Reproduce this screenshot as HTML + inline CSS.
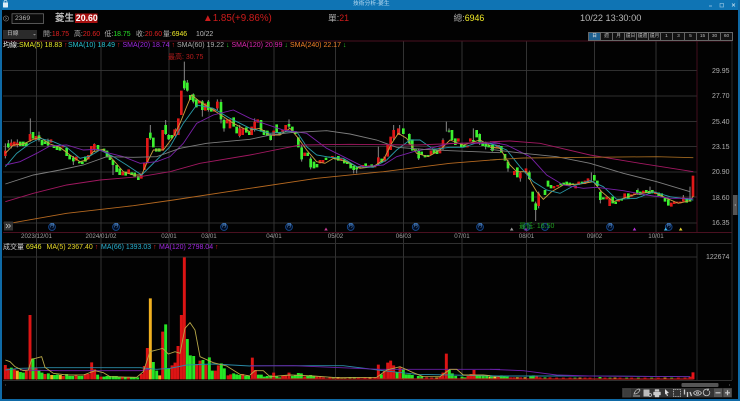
<!DOCTYPE html>
<html><head><meta charset="utf-8"><style>
html,body{margin:0;padding:0;background:#000}
#p{position:relative;width:740px;height:401px;overflow:hidden;background:#020202;font-family:"Liberation Sans","Noto Sans CJK TC",sans-serif;filter:blur(.3px)}
#p span,#p div.a{position:absolute;white-space:nowrap;line-height:1}
svg{position:absolute;left:0;top:0}
polyline{stroke-width:2.700}
.d{font-size:6.200px;color:#a0a0a0;top:234px;transform:translateX(-50%)}
.y{font-size:7px;color:#b0b0b0;left:712px}
.h{font-size:6.900px;top:32px;color:#b5b5b5}
.m{font-size:7px;top:41.500px}
.v{font-size:7px;top:244px}
.b{top:32px;height:7px;width:11px;border:.5px solid #666;font-size:4.800px;line-height:7px!important;text-align:center;color:#bbb;background:#111}
.t{font-size:4.800px;color:#6aa8e8}
</style></head><body><div id="p">
<svg width="740" height="401" viewBox="0 0 740 401">
<rect x="0" y="0" width="740" height="10" fill="#0f74b4"/>
<rect x="0" y="0" width="2" height="401" fill="#0f6aa6"/>
<rect x="738" y="0" width="2" height="401" fill="#0f6aa6"/>
<rect x="0" y="399" width="740" height="2" fill="#0f6aa6"/>
<rect x="3" y="2.500" width="5" height="5" fill="#dfeef8" rx=".5"/><path d="M4 3V1.800a1.500 1.500 0 0 1 3 0V3" stroke="#dfeef8" fill="none" stroke-width=".7"/>
<path d="M709 6h3" stroke="#9fcbe6" stroke-width=".8"/><rect x="720" y="3.500" width="3.500" height="3.500" fill="none" stroke="#9fcbe6" stroke-width=".6"/><path d="M732 3.500l3 3m0-3l-3 3" stroke="#cfe4f2" stroke-width=".7"/>
<circle cx="6" cy="18.500" r="2.600" fill="none" stroke="#888" stroke-width=".6"/><path d="M5 17.500l2 1-2 1" fill="none" stroke="#888" stroke-width=".5"/>
<rect x="12" y="13.800" width="31.500" height="9.700" fill="#0a0a0a" stroke="#777" stroke-width=".7"/>
<rect x="75" y="13.500" width="22.500" height="9.500" fill="#a81010"/>
<rect x="3" y="30" width="34" height="9" fill="#2b2b2b"/><path d="M33 34l1.500 1.500 1.500-1.500" fill="#888"/>
<!-- frame/grid -->
<path d="M3 70.500H697M3 96H697M3 121.500H697M3 146.500H697M3 172H697M3 197H697M3 223H697" stroke="#2f2f2f" stroke-width=".9"/>
<path d="M36.500 41V380M101 41V380M169 41V380M209 41V380M274 41V380M335.500 41V380M403.500 41V380M462 41V380M526.500 41V380M594.500 41V380M656 41V380" stroke="#383838" stroke-width=".9"/>
<path d="M3 41H732M3 232.500H732M697 41V232" stroke="#4a1020" stroke-width=".9"/>
<path d="M732 41V380M3 243.500H732M3 257H697M3 380.500H732M697 244V380" stroke="#303030" stroke-width=".9"/>
<!-- markers -->
<g fill="#000c22" stroke="#164a90" stroke-width=".9"><circle cx="52" cy="227" r="3.400"/><circle cx="116" cy="227" r="3.400"/><circle cx="224" cy="227" r="3.400"/><circle cx="289" cy="227" r="3.400"/><circle cx="350.700" cy="227" r="3.400"/><circle cx="415.700" cy="227" r="3.400"/><circle cx="480" cy="227" r="3.400"/><circle cx="526.700" cy="227" r="3.400"/><circle cx="545" cy="227" r="3.400"/><circle cx="610" cy="227" r="3.400"/><circle cx="668.700" cy="227" r="3.400"/></g>
<path d="M326 227.500l-1.800 3h3.600z" fill="#c03a90"/><path d="M511.700 227.500l-1.800 3h3.600z" fill="#999"/><path d="M634.500 227.500l-1.800 3h3.600z" fill="#b030d0"/><path d="M665.700 227.500l-1.800 3h3.600z" fill="#40b8f0"/><path d="M680.700 227.500l-1.800 3h3.600z" fill="#e0d030"/><path d="M526 227.500l-1.800 3h3.600z" fill="#8030a0"/>
<rect x="4" y="221.500" width="9" height="9" fill="#333"/><path d="M6 224l2 2-2 2M8.500 224l2 2-2 2" fill="none" stroke="#ccc" stroke-width=".7"/>
<!-- candles section 1 -->
<g transform="translate(0,60) scale(.33333)" fill="none">
<path stroke="#888" stroke-width="3" d="M16 250V295M25 240V265M34 238V265M52 238V262M91 175V245M117 215V245M144 236V260M220 288V315M283 250V275M339 300V345M451 195V240M497 180V225M506 222V240M527 205V232M553 5V90M562 60V95M580 100V130M607 120V170M625 120V155M652 118V150M663 118V190M672 175V215M719 195V232"/>
<path stroke="#e01818" stroke-width="8" d="M16 272V288M34 248V258M43 245V258M52 248V256M90 222V242M108 228V240M153 238V248M189 258V262M229 290V302M265 285V298M274 258V282M283 252V268M368 335V346M386 328V342M424 340V356M433 308V330M442 234V310M488 210V272M524 208V228M535 175V225M544 92V165M598 122V130M616 130V152M643 147V155M652 125V145M681 178V190M690 178V205M719 205V228M728 205V225"/>
<path stroke="#3cf030" stroke-width="8" d="M25 250V262M61 245V258M70 245V258M79 248V258M99 216V236M117 226V240M126 240V256M135 244V252M144 244V256M162 255V264M171 258V270M180 262V272M200 264V288M209 285V298M220 293V304M238 305V310M247 305V312M256 290V305M294 255V270M303 268V272M312 266V275M321 272V292M330 285V300M339 300V315M350 315V336M359 325V345M377 335V347M395 337V345M404 338V350M415 348V360M451 218V235M460 233V262M469 265V275M478 265V275M497 195V222M506 225V238M515 225V235M553 62V85M562 68V92M571 105V120M580 103V125M589 118V142M607 124V150M625 125V150M634 143V155M663 126V178M672 180V205M701 172V200M710 200V220M739 202V218M748 215V225"/>
<polyline stroke="#c8a040" points="16,280 40,255 70,252 100,238 120,232 150,252 180,262 210,285 240,305 260,300 280,275 310,268 340,300 370,335 400,345 425,345 440,310 460,270 490,270 520,230 540,190 560,140 575,105 600,125 640,150 670,170 700,190 750,215"/>
<polyline stroke="#2a9aa8" points="16,320 50,280 90,250 120,235 160,245 200,262 240,295 270,288 300,270 340,290 380,315 425,345 470,300 510,260 550,190 590,135 640,145 690,175 750,205"/>
<polyline stroke="#7a20a8" points="16,315 60,305 110,280 150,258 200,255 250,270 290,268 330,280 370,290 420,310 470,305 510,290 550,250 590,190 640,165 700,150 750,175"/>
<polyline stroke="#7d7d7d" points="16,372 100,345 180,330 250,315 320,290 400,292 470,290 540,265 620,250 750,238"/>
<polyline stroke="#a01860" points="16,425 100,400 200,375 300,360 420,350 510,335 600,310 750,285"/>
<polyline stroke="#b46820" points="40,488 200,460 400,437 520,420 750,385"/>
</g>
<!-- candles section 2 -->
<g transform="translate(250,60) scale(.33333)" fill="none">
<path stroke="#888" stroke-width="3" d="M14 175V215M62 222V242M117 178V205M155 255V305M182 290V328M311 318V340M320 320V340M385 260V315M431 195V240M449 195V225M478 220V255M506 265V300M589 185V215M597 205V218M579 235V270M670 205V245M689 220V255M707 245V268M727 252V275"/>
<path stroke="#e01818" stroke-width="8" d="M5 200V225M14 185V210M23 178V188M71 212V228M98 210V218M107 195V212M164 278V288M210 300V310M219 300V308M247 288V292M274 296V300M329 318V325M338 315V322M356 316V322M375 315V322M385 292V312M404 290V305M413 252V290M422 230V270M431 210V235M445 205V225M543 272V285M570 262V280M579 240V265M625 235V245M652 256V262M661 235V245M745 255V265"/>
<path stroke="#3cf030" stroke-width="8" d="M33 180V215M42 210V225M52 212V228M62 225V240M80 193V218M89 218V225M117 192V200M127 200V218M136 215V222M145 232V262M155 262V298M173 278V288M182 296V322M192 305V325M201 312V322M228 293V300M238 290V293M256 292V298M265 288V302M283 298V310M292 305V312M302 310V325M311 318V330M320 322V328M347 310V318M365 313V320M395 296V308M460 205V222M478 222V250M487 238V272M497 268V272M506 270V295M515 275V285M525 285V292M534 285V290M552 266V280M561 270V282M597 212V215M606 210V240M616 235V255M634 250V262M643 255V262M670 240V245M680 210V232M689 222V250M698 245V258M707 250V260M716 255V262M727 255V272"/>
<polyline stroke="#c8a040" points="0,210 30,205 60,225 90,225 120,205 145,235 170,270 200,305 225,310 250,295 290,305 330,325 370,320 400,300 425,250 445,220 470,235 500,280 535,290 570,270 600,240 640,255 690,240 730,262 750,265"/>
<polyline stroke="#2a9aa8" points="0,205 60,220 110,215 140,215 170,260 200,285 240,292 280,295 320,320 370,322 410,300 440,270 480,240 510,240 550,268 600,262 640,262 690,245 750,258"/>
<polyline stroke="#7a20a8" points="0,175 40,190 100,210 170,220 230,265 290,295 340,320 400,315 440,290 490,275 540,265 600,250 660,250 750,250"/>
<polyline stroke="#7d7d7d" points="0,238 60,225 120,218 230,212 300,222 380,240 440,262 520,268 600,272 750,278"/>
<polyline stroke="#a01860" points="0,285 100,265 150,255 300,253 500,255 750,245"/>
<polyline stroke="#b46820" points="0,385 200,355 400,335 600,310 750,298"/>
</g>
<!-- candles section 3 -->
<g transform="translate(490,60) scale(.33333)" fill="none">
<path stroke="#888" stroke-width="3" d="M54 300V335M91 335V365M118 332V360M137 425V483M146 395V445M304 337V365M331 392V430M600 380V415M580 405V425M480 380V400M444 385V405"/>
<path stroke="#e01818" stroke-width="8" d="M22 256V264M73 333V345M91 338V355M108 325V340M146 400V438M192 378V385M203 375V380M257 378V385M266 365V375M285 362V372M294 355V368M350 410V418M359 415V438M386 418V425M404 400V414M424 403V410M433 400V405M460 392V400M496 395V402M544 428V440M553 425V432M562 425V430M571 425V430M580 412V425"/>
<path stroke="#3cf030" stroke-width="8" d="M8 256V272M34 258V278M45 282V302M54 305V325M82 322V352M118 337V357M128 395V425M137 430V450M165 390V405M174 362V380M183 375V385M212 370V376M221 368V375M230 365V375M239 368V376M248 370V375M276 365V372M313 345V362M322 362V378M331 396V420M340 412V418M368 410V430M377 425V432M395 418V422M415 400V415M442 390V402M451 395V405M469 390V398M478 393V402M487 390V400M506 398V408M515 400V412M525 412V425M535 418V437M590 415V428M600 415V425"/>
<path stroke="#e01818" stroke-width="8" d="M609 347V410"/>
<polyline stroke="#c8a040" points="0,262 30,265 60,315 80,335 110,335 125,370 140,395 160,418 185,395 220,375 270,372 310,365 335,395 370,425 400,415 440,402 490,395 530,415 565,430 600,422 610,408"/>
<polyline stroke="#2a9aa8" points="0,250 50,270 90,320 130,365 170,390 210,400 250,378 300,362 340,380 380,418 440,415 490,395 540,410 610,420"/>
<polyline stroke="#7a20a8" points="0,245 50,255 120,290 170,345 220,375 280,385 320,382 400,392 470,405 540,415 610,415"/>
<polyline stroke="#7d7d7d" points="0,268 100,280 200,290 300,310 400,340 500,365 600,395"/>
<polyline stroke="#a01860" points="0,245 60,243 150,250 300,285 450,310 610,335"/>
<polyline stroke="#a06820" points="0,300 100,294 300,292 500,290 610,293"/>
</g>
<!-- volume section 1 -->
<g transform="translate(0,240) scale(.33333)" fill="none" stroke-width="8.800">
<path stroke="#dc1414" d="M16 375V418M25 385V418M43 388V418M79 392V418M90 225V418M108 382V418M135 402V418M190 408V418M228 406V418M256 402V418M265 402V418M275 367V418M284 388V418M303 410V418M367 410V418M385 412V418M424 402V418M433 378V418M442 324V418M488 275V418M516 376V418M525 368V418M534 318V418M544 225V418M553 52V418M590 375V418M600 362V418M618 375V418M646 392V418M655 376V418M684 406V418M692 403V418M728 402V418"/>
<path stroke="#26e626" d="M34 383V418M61 396V418M70 398V418M99 355V418M117 392V418M126 398V418M145 400V418M163 405V418M172 404V418M200 402V418M209 408V418M218 408V418M237 408V418M246 408V418M293 404V418M312 410V418M321 408V418M330 408V418M340 408V418M349 408V418M358 410V418M376 412V418M394 412V418M403 412V418M413 412V418M460 366V418M470 392V418M497 253V418M506 385V418M562 297V418M571 346V418M581 348V418M609 360V418M628 352V418M637 392V418M664 370V418M673 385V418M701 400V418M710 403V418M719 405V418M737 408V418M746 408V418"/>
<path stroke="#f0b020" d="M52 392V418M155 405V418M181 405V418M451 175V418M479 406V418"/>
<polyline stroke="#2a8aa8" points="16,390 60,385 130,383 420,383 470,388 510,385 560,375 640,372 750,378"/>
<polyline stroke="#7a20a8" points="60,390 180,392 420,392 450,388"/>
<polyline stroke="#b8a848" points="16,360 30,365 45,380 70,392 85,390 95,358 125,350 135,382 160,400 200,405 250,405 285,392 310,398 330,410 410,412 430,395 450,335 470,330 488,325 505,342 525,335 540,340 555,265 570,248 585,270 600,350 640,368 680,378 720,403 750,408"/>
</g>
<!-- volume section 2 -->
<g transform="translate(250,240) scale(.33333)" fill="none" stroke-width="8.800">
<path stroke="#dc1414" d="M7 353V418M16 390V418M71 398V418M98 408V418M107 405V418M117 398V418M164 410V418M200 410V418M210 410V418M220 412V418M240 412V418M325 413V418M345 413V418M375 411V418M385 374V418M403 393V418M413 368V418M422 362V418M431 376V418M450 382V418M530 412V418M545 413V418M570 410V418M579 398V418M589 341V418M654 408V418M663 402V418M672 390V418M730 408V418M745 410V418"/>
<path stroke="#26e626" d="M25 404V418M34 404V418M43 410V418M52 408V418M62 406V418M80 408V418M89 412V418M127 408V418M136 406V418M145 399V418M154 400V418M173 408V418M182 405V418M191 408V418M250 413V418M275 413V418M285 413V418M300 411V418M313 411V418M394 403V418M441 396V418M460 388V418M469 403V418M478 403V418M487 405V418M505 408V418M515 408V418M598 390V418M607 400V418M617 408V418M636 410V418M645 412V418M681 405V418M690 405V418M700 405V418M710 408V418"/>
<path stroke="#e8d030" d="M264 411V418M360 413V418M560 413V418M720 410V418"/>
<path stroke="#b01818" stroke-width="4" d="M0 417H750"/>
<polyline stroke="#2a8aa8" points="0,377 280,377 400,392 500,403 750,408"/>
<polyline stroke="#6a20a8" points="0,378 130,377 200,380 390,388 750,388"/>
<polyline stroke="#b8a848" points="0,405 15,392 40,392 60,410 120,405 190,408 260,413 380,412 410,390 450,380 490,398 520,410 570,410 600,388 620,388 640,405 700,405 750,410"/>
</g>
<!-- volume section 3 -->
<g transform="translate(490,240) scale(.33333)" fill="none" stroke-width="8.800">
<path stroke="#dc1414" d="M25 412V418M62 412V418M72 412V418M92 412V418M140 408V418M150 412V418M180 412V418M200 413V418M220 413V418M240 413V418M285 413V418M300 413V418M345 413V418M390 413V418M425 413V418M465 413V418M505 413V418M565 413V418M585 413V418M600 410V418"/>
<path stroke="#26e626" d="M5 410V418M34 406V418M43 407V418M52 410V418M122 408V418M130 406V418M165 412V418M255 413V418M330 411V418M360 413V418M410 413V418M445 413V418M485 413V418M545 413V418"/>
<path stroke="#e8d030" d="M15 410V418M82 412V418M105 412V418M270 413V418M375 413V418M525 413V418"/>
<path stroke="#e8141a" d="M609 397V418"/>
<path stroke="#b01818" stroke-width="4" d="M0 417H610"/>
<polyline stroke="#2a8aa8" points="0,408 300,408 600,410"/>
<polyline stroke="#6a20a8" points="0,388 100,392 200,405 300,408 600,410"/>
</g>
<!-- right scrollbar -->
<rect x="733" y="195" width="4.500" height="20" fill="#555"/><path d="M735.800 204l-1 1 1 1" stroke="#ccc" stroke-width=".5" fill="none"/>
<!-- bottom scrollbar -->
<rect x="681.500" y="383" width="37" height="4" fill="#555" rx="1"/>
<path d="M729 384l1 1-1 1" stroke="#666" stroke-width=".5" fill="none"/><path d="M6 384l-1 1 1 1" stroke="#555" stroke-width=".5" fill="none"/>
<!-- toolbar -->
<rect x="622" y="388" width="110" height="9.500" fill="#333"/>
<g stroke="#c8c8c8" fill="none" stroke-width=".8">
<rect x="623.500" y="389" width="7" height="8" stroke="#444" fill="#3c3c3c"/>
<path d="M633 396h7M634 394c1-3 3-5 5-5l1 1c-1 2-3 4-5 4z"/>
<rect x="643.500" y="389.500" width="6" height="7" fill="#bbb" stroke="none"/><circle cx="650" cy="395" r="1.500"/>
<path d="M655 391.500v-2h4v2M653.500 392h7v3h-7zM655 394.500h4v2.500h-4z" fill="#ccc" stroke="#ccc" stroke-width=".4"/>
<path d="M665 389l4 4-2 .3 1 2.500-1 .3-1-2.500-1 1z" fill="#ddd" stroke="none"/>
<rect x="673.500" y="389.500" width="7" height="7" stroke-dasharray="1 .7"/>
<path d="M684.500 389.500v5M687.500 392v5M690 392l1.500 4" stroke-width="1.300"/>
<path d="M693.500 393c2-3 6-3 8 0-2 3-6 3-8 0z"/><circle cx="697.500" cy="393" r="1"/>
<path d="M709.500 391a3.300 3.300 0 1 1-1-1.200M708 388.500l.6 1.500-1.600.3"/>
<rect x="714" y="388.500" width="8" height="8.500" fill="#555" stroke="none"/><path d="M715.500 392.800h5" stroke-width="1.200"/>
<rect x="723.500" y="388.500" width="8" height="8.500" fill="#555" stroke="none"/><path d="M725 392.800h5M727.500 390.300v5" stroke-width="1.200"/>
</g>
</svg>
<span style="left:353px;top:2px;font-size:5.800px;color:#b9dcf2">技術分析-菱生</span>
<span style="left:15px;top:15.500px;font-size:6.800px;color:#bbb">2369</span>
<span style="left:55px;top:13.500px;font-size:9.500px;font-weight:bold;color:#c0c0c0">菱生</span>
<span style="left:75.800px;top:14.300px;font-size:8.800px;font-weight:bold;color:#fff">20.60</span>
<span style="left:203px;top:13.500px;font-size:9.800px;color:#cc1c1c">▲1.85(+9.86%)</span>
<span style="left:328px;top:14px;font-size:8.800px;color:#aaa">單:<b style="font-weight:normal;color:#cc1c1c">21</b></span>
<span style="left:453.500px;top:14px;font-size:8.800px;color:#aaa">總:<b style="font-weight:normal;color:#f0ea28">6946</b></span>
<span style="left:580px;top:13.500px;font-size:9.200px;color:#b8b8b8">10/22 13:30:00</span>
<span style="left:7px;top:31.500px;font-size:5.800px;color:#bbb">日線</span>
<span class="h" style="left:43px">開:<b style="font-weight:normal;color:#e02020">18.75</b></span>
<span class="h" style="left:74px">高:<b style="font-weight:normal;color:#e02020">20.60</b></span>
<span class="h" style="left:104.500px">低:<b style="font-weight:normal;color:#28e028">18.75</b></span>
<span class="h" style="left:136px">收:<b style="font-weight:normal;color:#e02020">20.60</b></span>
<span class="h" style="left:163px">量:<b style="font-weight:normal;color:#f0ea28">6946</b></span>
<span class="h" style="left:196px;color:#bbb">10/22</span>
<span class="m" style="left:3px;color:#eee">均線:<b style="font-weight:normal;color:#e8e828">SMA(5) 18.83 <i style="font-style:normal;color:#e02020">↑</i></b></span>
<span class="m" style="left:68px;color:#28c0d0">SMA(10) 18.49 <i style="font-style:normal;color:#e02020">↑</i></span>
<span class="m" style="left:122.500px;color:#a028e0">SMA(20) 18.74 <i style="font-style:normal;color:#e02020">↑</i></span>
<span class="m" style="left:177px;color:#aaa">SMA(60) 19.22 <i style="font-style:normal;color:#28c828">↓</i></span>
<span class="m" style="left:231.500px;color:#e028b0">SMA(120) 20.99 <i style="font-style:normal;color:#28c828">↓</i></span>
<span class="m" style="left:290px;color:#f08028">SMA(240) 22.17 <i style="font-style:normal;color:#28c828">↓</i></span>
<span style="left:168px;top:53.500px;font-size:7px;color:#b81c1c">最高: 30.75</span>
<span style="left:519px;top:222.500px;font-size:7px;color:#22a022">最低: 16.50</span>
<div class="a b" style="left:588px;background:#1d5f8f;color:#eee">日</div>
<div class="a b" style="left:600px">週</div>
<div class="a b" style="left:612px">月</div>
<div class="a b" style="left:624px">還日</div>
<div class="a b" style="left:636px">還週</div>
<div class="a b" style="left:648px">還月</div>
<div class="a b" style="left:660px">1</div>
<div class="a b" style="left:672px">3</div>
<div class="a b" style="left:684px">5</div>
<div class="a b" style="left:696px">15</div>
<div class="a b" style="left:708px">30</div>
<div class="a b" style="left:720px">60</div>
<span class="y" style="top:68px">29.95</span>
<span class="y" style="top:93px">27.70</span>
<span class="y" style="top:118.500px">25.40</span>
<span class="y" style="top:143.500px">23.15</span>
<span class="y" style="top:169px">20.90</span>
<span class="y" style="top:194.500px">18.60</span>
<span class="y" style="top:219.500px">16.35</span>
<span class="y" style="top:254px;left:706px">122674</span>
<span class="t" style="left:49.700px;top:224.700px">月</span><span class="t" style="left:113.700px;top:224.700px">月</span><span class="t" style="left:221.700px;top:224.700px">月</span><span class="t" style="left:286.700px;top:224.700px">月</span><span class="t" style="left:348.400px;top:224.700px">月</span><span class="t" style="left:413.400px;top:224.700px">月</span><span class="t" style="left:477.700px;top:224.700px">月</span><span class="t" style="left:607.700px;top:224.700px">月</span><span class="t" style="left:666.400px;top:224.700px">月</span>
<span class="d" style="left:36.500px">2023/12/01</span>
<span class="d" style="left:101px">2024/01/02</span>
<span class="d" style="left:169px">02/01</span>
<span class="d" style="left:209px">03/01</span>
<span class="d" style="left:274px">04/01</span>
<span class="d" style="left:335.500px">05/02</span>
<span class="d" style="left:403.500px">06/03</span>
<span class="d" style="left:462px">07/01</span>
<span class="d" style="left:526.500px">08/01</span>
<span class="d" style="left:594.500px">09/02</span>
<span class="d" style="left:656px">10/01</span>
<span class="v" style="left:3px;color:#ccc">成交量</span>
<span class="v" style="left:26px;color:#e8e828">6946</span>
<span class="v" style="left:46.500px;color:#e8d828">MA(5) 2367.40 <i style="font-style:normal;color:#e02020">↑</i></span>
<span class="v" style="left:101px;color:#28b0d0">MA(66) 1393.03 <i style="font-style:normal;color:#e02020">↑</i></span>
<span class="v" style="left:159px;color:#a028e0">MA(120) 2798.04 <i style="font-style:normal;color:#e02020">↑</i></span>
</div></body></html>
